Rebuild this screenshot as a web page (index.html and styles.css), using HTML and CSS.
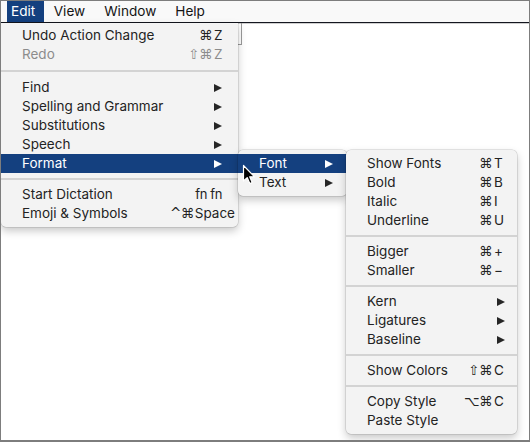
FILE: index.html
```html
<!DOCTYPE html>
<html>
<head>
<meta charset="utf-8">
<link rel="stylesheet" href="styles.css">
</head>
<body>
<div class="screen">
  <div class="menubar">
    <span class="mb-item active">Edit</span>
    <span class="mb-item">View</span>
    <span class="mb-item">Window</span>
    <span class="mb-item">Help</span>
  </div>
  <div class="bg-window"></div>

  <div class="menu menu-edit">
    <div class="item"><span class="label">Undo Action Change</span><span class="sc"><span class="mod">⌘</span><span class="key">Z</span></span></div>
    <div class="item disabled"><span class="label">Redo</span><span class="sc"><span class="mod">⇧⌘</span><span class="key">Z</span></span></div>
    <div class="sep sep-tall"></div>
    <div class="item"><span class="label">Find</span><span class="arrow"></span></div>
    <div class="item"><span class="label">Spelling and Grammar</span><span class="arrow"></span></div>
    <div class="item"><span class="label">Substitutions</span><span class="arrow"></span></div>
    <div class="item"><span class="label">Speech</span><span class="arrow"></span></div>
    <div class="item selected"><span class="label">Format</span><span class="arrow"></span></div>
    <div class="sep"></div>
    <div class="item"><span class="label">Start Dictation</span><span class="sc plain">fn fn</span></div>
    <div class="item"><span class="label">Emoji &amp; Symbols</span><span class="sc overflow"><span class="mod">^⌘</span><span class="key wide">Space</span></span></div>
  </div>

  <div class="menu menu-format">
    <div class="item selected"><span class="label">Font</span><span class="arrow"></span></div>
    <div class="item"><span class="label">Text</span><span class="arrow"></span></div>
  </div>

  <div class="menu menu-font">
    <div class="item"><span class="label">Show Fonts</span><span class="sc"><span class="mod">⌘</span><span class="key">T</span></span></div>
    <div class="item"><span class="label">Bold</span><span class="sc"><span class="mod">⌘</span><span class="key">B</span></span></div>
    <div class="item"><span class="label">Italic</span><span class="sc"><span class="mod">⌘</span><span class="key">I</span></span></div>
    <div class="item"><span class="label">Underline</span><span class="sc"><span class="mod">⌘</span><span class="key">U</span></span></div>
    <div class="sep"></div>
    <div class="item"><span class="label">Bigger</span><span class="sc"><span class="mod">⌘</span><span class="key">+</span></span></div>
    <div class="item"><span class="label">Smaller</span><span class="sc"><span class="mod">⌘</span><span class="key">−</span></span></div>
    <div class="sep"></div>
    <div class="item"><span class="label">Kern</span><span class="arrow"></span></div>
    <div class="item"><span class="label">Ligatures</span><span class="arrow"></span></div>
    <div class="item"><span class="label">Baseline</span><span class="arrow"></span></div>
    <div class="sep"></div>
    <div class="item"><span class="label">Show Colors</span><span class="sc"><span class="mod">⇧⌘</span><span class="key">C</span></span></div>
    <div class="sep"></div>
    <div class="item"><span class="label">Copy Style</span><span class="sc"><span class="mod">⌥⌘</span><span class="key">C</span></span></div>
    <div class="item"><span class="label">Paste Style</span></div>
  </div>

  <svg class="cursor" width="14" height="22" viewBox="0 0 14 22">
    <path d="M1.5 1.5 L1.5 17 L5.2 13.6 L7.8 19.6 L10.2 18.6 L7.7 12.8 L12.6 12.8 Z" fill="#000" stroke="#fff" stroke-width="1.2" stroke-linejoin="round"/>
  </svg>
</div>
</body>
</html>
```

FILE: styles.css
```css
html, body {
  margin: 0;
  padding: 0;
  background: #ffffff;
}

.screen {
  position: relative;
  width: 530px;
  height: 442px;
  box-sizing: border-box;
  border: 1px solid #7d7d7d;
  border-bottom-width: 2px;
  overflow: hidden;
  font-family: "Inter", "Liberation Sans", sans-serif;
  color: #232323;
  background: #ffffff;
}

.menubar {
  display: flex;
  height: 21px;
  padding-left: 6px;
  background: #f9f9f9;
  border-bottom: 1px solid #14161f;
  box-shadow: 0 1px 0 #cfcfcf;
  font-size: 13.6px;
  line-height: 21px;
  color: #141414;
}

.mb-item {
  padding: 0 9.5px;
}

.mb-item.active {
  padding: 0 9px 0 4px;
  background: #14407f;
  color: #ffffff;
}

.bg-window {
  position: absolute;
  left: -1px;
  top: 22px;
  width: 241px;
  height: 21px;
  border-right: 1px solid #9a9a9a;
  border-bottom: 1px solid #9a9a9a;
}

.menu {
  position: absolute;
  background: #f3f3f3;
  font-size: 13.5px;
  box-sizing: border-box;
  box-shadow: 0 0 0 0.5px rgba(0, 0, 0, 0.18), 0 4px 9px rgba(0, 0, 0, 0.22);
  border-radius: 5px;
}

.menu-edit {
  left: 0;
  top: 22px;
  width: 237px;
  padding: 3px 0 4px;
  border-radius: 0 0 5px 5px;
  --pad-r: 16px;
  --key-w: 8px;
}

.menu-format {
  left: 237px;
  top: 149px;
  width: 109px;
  padding: 4px 0;
  --pad-r: 14px;
  --key-w: 8px;
  z-index: 1;
}

.menu-font {
  left: 345px;
  top: 149px;
  width: 171px;
  padding: 4px 0;
  --pad-r: 12px;
  --key-w: 11px;
  z-index: 2;
}

.item {
  display: flex;
  align-items: center;
  height: 19px;
  padding: 0 var(--pad-r) 0 21px;
  white-space: nowrap;
}

.item .label {
  flex: 1;
  margin-bottom: 2px;
}

.item.disabled {
  color: #8c8c8c;
}

.item.selected {
  background: #14407f;
  color: #ffffff;
}

.sc {
  display: flex;
  align-items: baseline;
  justify-content: flex-end;
  margin-bottom: 2px;
  font-family: "DejaVu Sans", sans-serif;
}

.sc .mod {
  text-align: right;
  font-size: 13.5px;
  letter-spacing: -0.5px;
}

.sc .key {
  width: var(--key-w);
  margin-left: 2px;
  text-align: left;
  white-space: nowrap;
  font-family: "Inter", "Liberation Sans", sans-serif;
  font-size: 13.5px;
}

.sc .key.wide {
  width: auto;
  margin-left: 1px;
}

.sc.overflow {
  margin-right: -13px;
}

.sc.plain {
  font-family: "Inter", "Liberation Sans", sans-serif;
  font-size: 13px;
  letter-spacing: -0.4px;
}

.arrow {
  width: 0;
  height: 0;
  border-left: 8px solid #262626;
  border-top: 4.5px solid transparent;
  border-bottom: 4.5px solid transparent;
}

.item.selected .arrow {
  border-left-color: #ffffff;
}

.sep {
  height: 12px;
  display: flex;
  align-items: center;
}

.sep::before {
  content: "";
  flex: 1;
  height: 2px;
  background: #d3d3d3;
}

.sep-tall {
  height: 14px;
}

.cursor {
  position: absolute;
  left: 241px;
  top: 163px;
  z-index: 5;
}
```
